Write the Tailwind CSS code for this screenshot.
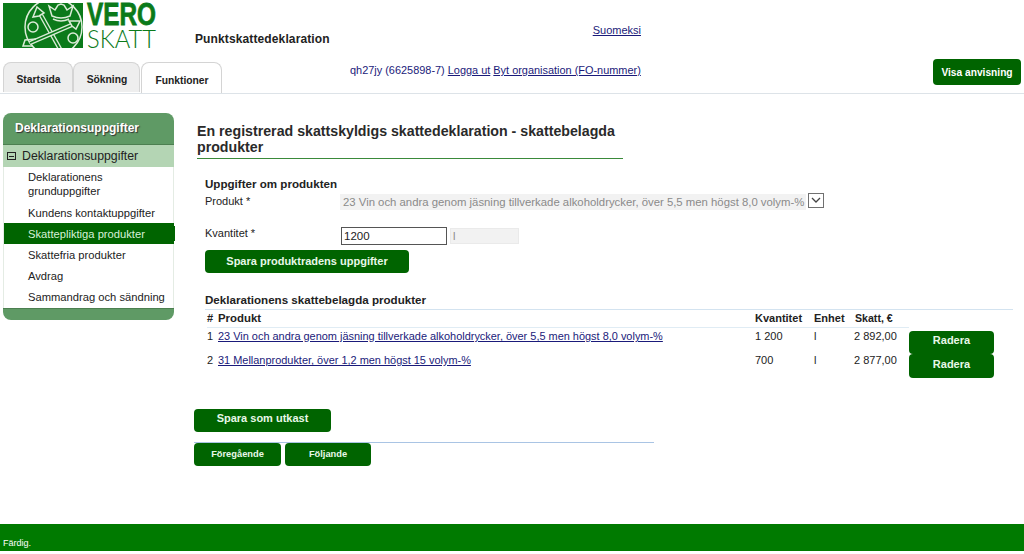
<!DOCTYPE html>
<html lang="sv">
<head>
  <meta charset="UTF-8">
  <title>Punktskattedeklaration</title>
  <script src="https://cdn.jsdelivr.net/npm/@tailwindcss/browser@4"></script>
</head>
<body class="bg-white font-['Liberation_Sans',Arial,sans-serif] text-[11px] text-[#222] overflow-hidden">
<div class="w-[1024px] h-[554px] flex flex-col">

  <!-- header -->
  <header class="h-[94px] border-b border-[#dde3e8] flex flex-col">
    <div class="h-[63px] flex">
      <svg class="ml-[3px] mt-[2px] w-[156px] h-[48px] overflow-visible" viewBox="0 0 156 48">
        <defs><clipPath id="logoClip"><rect x="0" y="1" width="80" height="45"/></clipPath></defs>
        <rect x="0" y="1" width="80" height="45" fill="#0b7a1a"/>
        <g clip-path="url(#logoClip)" fill="none" stroke="#dcecd8" stroke-width="1.500">
          <circle cx="50.500" cy="25" r="28.500"/>
          <circle cx="30" cy="25" r="5"/>
          <circle cx="70" cy="36" r="5"/>
          <!-- arrows -->
          <path d="M38 13 L57 47" stroke-width="4.500"/>
          <path d="M38 13 L57 47" stroke="#0b7a1a" stroke-width="1.800"/>
          <path d="M34 5 L30 15 L36 14 L41 11 Z" fill="#0b7a1a"/>
          <path d="M71 22 L27 41" stroke-width="4.500"/>
          <path d="M71 22 L27 41" stroke="#0b7a1a" stroke-width="1.800"/>
          <path d="M77 19 L66 19 L69 24 L73 27 Z" fill="#0b7a1a"/>
          <path d="M33 37 L22 38 L20 44 L30 44"/>
          <!-- crown -->
          <path d="M49 14 L46 4 L52 8 L55 3 L58 2 L61 3 L64 8 L70 4 L67 14 Q58 18 49 14 Z" fill="#0b7a1a"/>
          <path d="M50 17 Q58 21 66 17"/>
        </g>
        <text x="84" y="23" textLength="69" lengthAdjust="spacingAndGlyphs" font-size="32" font-weight="700" fill="#0b7a1a" stroke="#0b7a1a" stroke-width="0.800">VERO</text>
        <text x="84" y="46" textLength="69" lengthAdjust="spacingAndGlyphs" font-size="25" font-family="Lato, Roboto, sans-serif" font-weight="300" fill="#0b7a1a">SKATT</text>
      </svg>
      <div class="ml-[36px] mt-[32px] font-bold text-[12px] tracking-[0.12px] leading-[14px]">Punktskattedeklaration</div>
      <a class="ml-[263px] mt-[23px] underline text-[#1a1a7a] leading-[14px]">Suomeksi</a>
    </div>
    <div class="h-[30px] flex items-end">
      <nav class="ml-[3px] flex font-bold text-[10.300px]">
        <div class="w-[70px] h-[30px] pt-[5px] pl-px bg-[#eeeeee] border border-b-0 border-[#d4d4d4] rounded-t-[8px] flex items-center justify-center">Startsida</div>
        <div class="w-[67px] h-[30px] pt-[5px] pl-px bg-[#eeeeee] border border-b-0 border-[#d4d4d4] rounded-t-[8px] flex items-center justify-center">Sökning</div>
        <div class="ml-px w-[81px] h-[31px] pt-[5px] pl-px bg-white border border-b-0 border-[#d4d4d4] rounded-t-[8px] flex items-center justify-center">Funktioner</div>
      </nav>
      <div class="ml-[128px] self-start leading-[14px] text-[#1a1a7a] text-[10.930px]">qh27jy (6625898-7) <a class="underline">Logga ut</a> <a class="underline">Byt organisation (FO-nummer)</a></div>
      <button class="ml-auto mr-[3px] mb-[8px] w-[88px] h-[26px] pt-px bg-[#006400] rounded-[4px] text-white font-bold text-[10.200px]">Visa anvisning</button>
    </div>
  </header>

  <div class="flex flex-1">
    <!-- sidebar -->
    <aside class="ml-[3px] mt-[19px] w-[172px]">
      <div class="w-[171px]">
        <div class="h-[32px] bg-[#5f9a65] border-b border-[#4c7f50] rounded-t-[8px] pl-[12px] pb-[2px] flex items-center font-bold text-white text-[12px] [text-shadow:1px_1px_1px_#333]">Deklarationsuppgifter</div>
        <div class="h-[22px] bg-[#b4d5b4] flex items-center pl-[4px] gap-[6px] text-[12.300px]">
          <span class="w-[9px] h-[8px] border border-[#222] flex items-center justify-center"><span class="w-[5px] h-px bg-[#222]"></span></span>
          Deklarationsuppgifter
        </div>
        <ul class="text-[11.200px] border-x border-[#e4ece4]">
          <li class="pl-[24px] pt-[3px] pb-[4px] leading-[14px]">Deklarationens<br>grunduppgifter</li>
          <li class="pl-[24px] h-[21px] pt-[2px] flex items-center">Kundens kontaktuppgifter</li>
          <li class="pl-[24px] h-[21px] pt-[2px] -mr-px flex items-center bg-[#006400] text-[#d8f0d8] relative">
            Skattepliktiga produkter
            <span class="absolute -right-px top-[3px] w-px h-[15px] bg-[#006400]"></span>
          </li>
          <li class="pl-[24px] h-[21px] pt-[2px] flex items-center">Skattefria produkter</li>
          <li class="pl-[24px] h-[21px] pt-[2px] flex items-center">Avdrag</li>
          <li class="pl-[24px] h-[22px] flex items-center whitespace-nowrap">Sammandrag och sändning</li>
        </ul>
        <div class="h-[12px] bg-[#5f9a65] border-t border-[#4c7f50] rounded-b-[8px]"></div>
      </div>
    </aside>

    <!-- content -->
    <main class="ml-[19px] w-[830px] flex flex-col">
      <h1 class="mt-[29px] ml-[3px] w-[426px] pb-[3px] border-b border-[#3a8a3a] font-bold text-[14.200px] leading-[16px] text-[#2a2a2a]">En registrerad skattskyldigs skattedeklaration - skattebelagda produkter</h1>

      <section class="ml-[11px] mt-[18px]">
        <div class="font-bold text-[11.600px] leading-[14px]">Uppgifter om produkten</div>
        <div class="flex items-start h-[18px] mt-[2px]">
          <label class="w-[135px] leading-[14px] mt-px">Produkt *</label>
          <div class="w-[466px] h-[16px] mt-px bg-[#f2f2f2] text-[#8a8a8a] text-[11.350px] pl-[3px] leading-[16px] whitespace-nowrap">23 Vin och andra genom jäsning tillverkade alkoholdrycker, över 5,5 men högst 8,0 volym-%</div>
          <span class="ml-[2px] w-[16px] h-[15px] border border-[#707070] flex items-center justify-center">
            <svg class="w-[10px] h-[7px]" viewBox="0 0 10 7"><path d="M1 1l4 4 4-4" fill="none" stroke="#444" stroke-width="1.300"/></svg>
          </span>
        </div>
        <div class="flex items-start h-[18px] mt-[16px]">
          <label class="w-[136px] leading-[12px]">Kvantitet *</label>
          <input class="w-[106px] h-[18px] border border-[#555] px-[2px] text-[11.500px] text-[#222] outline-none" value="1200">
          <div class="ml-[3px] mt-px w-[69px] h-[16px] bg-[#f2f2f2] border border-[#eaeaea] pl-[2px] leading-[14px] text-[#8a8a8a]">l</div>
        </div>
        <button class="mt-[5px] w-[204px] h-[23px] bg-[#006400] rounded-[4px] text-[#e8f8e8] font-bold">Spara produktradens uppgifter</button>
      </section>

      <section class="ml-[11px] mt-[20px] w-[808px]">
        <div class="font-bold text-[11.600px] leading-[14px] h-[17px] border-b border-[#d3e3f0]">Deklarationens skattebelagda produkter</div>
        <div class="grid grid-cols-[11px_537px_59px_41px_54px_85px] pl-[2px]">
          <div class="font-bold h-[18px] flex items-center border-b border-[#e0ecf4] col-span-5 grid grid-cols-subgrid">
            <span>#</span><span class="text-[11.400px]">Produkt</span><span>Kvantitet</span><span>Enhet</span><span class="text-[10.600px]">Skatt, €</span>
          </div>
          <div></div>

          <div class="pt-px leading-[14px]">1</div>
          <a class="pt-px leading-[14px] underline text-[#1a1a7a] text-[10.950px]">23 Vin och andra genom jäsning tillverkade alkoholdrycker, över 5,5 men högst 8,0 volym-%</a>
          <div class="pt-px leading-[14px]">1 200</div>
          <div class="pt-px leading-[14px]">l</div>
          <div class="pt-px leading-[14px] -ml-px">2 892,00</div>
          <button class="mt-[3px] h-[23px] pb-[4px] bg-[#006400] rounded-[4px] text-[#e8f8e8] font-bold">Radera</button>

          <div class="leading-[12px]">2</div>
          <a class="leading-[12px] underline text-[#1a1a7a] text-[10.950px]">31 Mellanprodukter, över 1,2 men högst 15 volym-%</a>
          <div class="leading-[12px]">700</div>
          <div class="leading-[12px]">l</div>
          <div class="leading-[12px] -ml-px">2 877,00</div>
          <button class="h-[24px] pb-[4px] bg-[#006400] rounded-[4px] text-[#e8f8e8] font-bold">Radera</button>
        </div>
      </section>

      <button class="mt-[31px] w-[137px] h-[23px] bg-[#006400] rounded-[4px] text-[#e8f8e8] font-bold pb-[4px]">Spara som utkast</button>

      <div class="mt-[10px] w-[460px] border-t border-[#a9c4e4] flex gap-[4px]">
        <button class="w-[87px] h-[23px] bg-[#006400] rounded-[4px] text-[#e8f8e8] font-bold text-[9.300px]">Föregående</button>
        <button class="w-[86px] h-[23px] bg-[#006400] rounded-[4px] text-[#e8f8e8] font-bold text-[9.300px]">Följande</button>
      </div>
    </main>
  </div>

  <!-- status bar -->
  <footer class="h-[27px] mb-[3px] bg-[#007a00] text-white text-[9px] pl-[3px] pt-[14px] leading-[10px]">Färdig.</footer>
</div>
</body>
</html>
